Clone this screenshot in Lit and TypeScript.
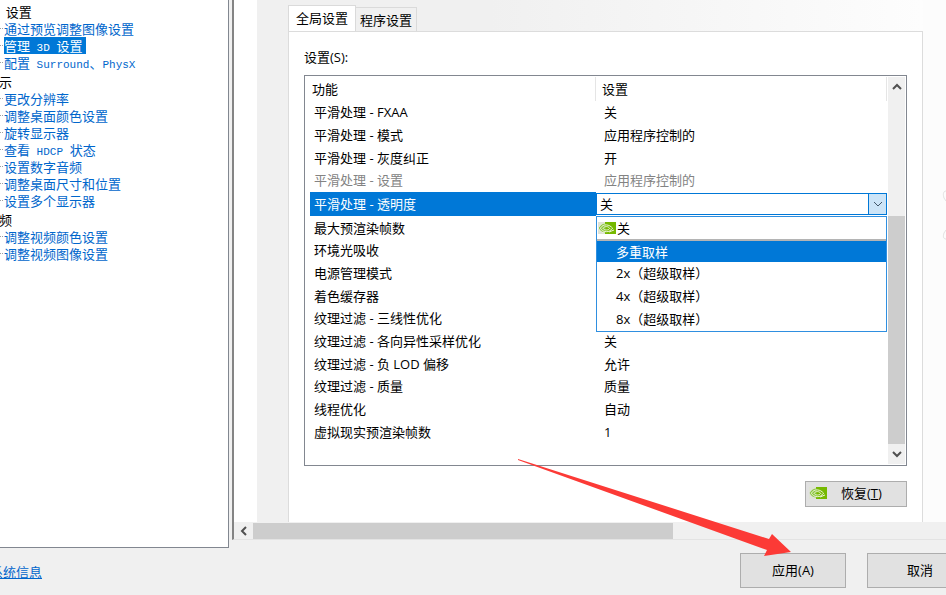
import { LitElement, html, css, svg, nothing } from "lit";
import { customElement, state } from "lit/decorators.js";

type Row = { name: string; value: string; disabled?: boolean; active?: boolean };
type Task = { label: string; header?: boolean; selected?: boolean };

const TASKS: Task[] = [
  { label: "查看辅助功能" },
  { label: "3D 设置", header: true },
  { label: "通过预览调整图像设置" },
  { label: "管理 3D 设置", selected: true },
  { label: "配置 Surround、PhysX" },
  { label: "显示", header: true },
  { label: "更改分辨率" },
  { label: "调整桌面颜色设置" },
  { label: "旋转显示器" },
  { label: "查看 HDCP 状态" },
  { label: "设置数字音频" },
  { label: "调整桌面尺寸和位置" },
  { label: "设置多个显示器" },
  { label: "视频", header: true },
  { label: "调整视频颜色设置" },
  { label: "调整视频图像设置" },
];

const ROWS: Row[] = [
  { name: "平滑处理 - FXAA", value: "关" },
  { name: "平滑处理 - 模式", value: "应用程序控制的" },
  { name: "平滑处理 - 灰度纠正", value: "开" },
  { name: "平滑处理 - 设置", value: "应用程序控制的", disabled: true },
  { name: "平滑处理 - 透明度", value: "关", active: true },
  { name: "最大预渲染帧数", value: "" },
  { name: "环境光吸收", value: "" },
  { name: "电源管理模式", value: "" },
  { name: "着色缓存器", value: "" },
  { name: "纹理过滤 - 三线性优化", value: "" },
  { name: "纹理过滤 - 各向异性采样优化", value: "关" },
  { name: "纹理过滤 - 负 LOD 偏移", value: "允许" },
  { name: "纹理过滤 - 质量", value: "质量" },
  { name: "线程优化", value: "自动" },
  { name: "虚拟现实预渲染帧数", value: "1" },
];

const OPTIONS = ["多重取样", "2x（超级取样）", "4x（超级取样）", "8x（超级取样）"];

const nvidiaMark = html`<svg class="mark" viewBox="0 0 18 12" aria-hidden="true">
  <rect x="7" y="0" width="11" height="12" fill="#76b900" />
  <path d="M0 6C2 2.800 4.500 1.400 7 1.200V0H0zM0 6C2 9.500 4.500 11 7 11V12H0z" fill="#dfe3d6" />
  <path d="M0.600 6C2.500 3 4.800 1.600 7.500 1.600V10.600C4.600 10.600 2.200 9 0.600 6z" fill="#8dc63f" />
  <path d="M2.400 6.200C4 3.600 6 2.800 8.200 2.900C11 3 13 4.400 14.600 6.200C12.800 8.600 10.600 9.800 8.200 9.700C5.400 9.600 3.500 8.400 2.400 6.200z" fill="none" stroke="#eef6dc" stroke-width="1" />
  <path d="M5 6.300C6 5 7 4.600 8.300 4.600C10 4.600 11 5.400 11.800 6.300C10.800 7.500 9.800 8 8.400 8C6.800 8 5.700 7.400 5 6.300z" fill="none" stroke="#eef6dc" stroke-width="1" />
  <path d="M11 10L16 8" stroke="#eef6dc" stroke-width="1" />
</svg>`;

const chevron = (d: string, color: string, width: number) =>
  html`<svg class="chevron" viewBox="0 0 10 10" aria-hidden="true">
    ${svg`<path d=${d} fill="none" stroke=${color} stroke-width=${width} />`}
  </svg>`;

/* Latin runs in the task tree are set in a monospaced face. */
const mixed = (text: string) =>
  text
    .split(/([ -~]+)/)
    .map((part) => (/^[ -~]+$/.test(part) ? html`<span class="mono">${part}</span>` : part));

@customElement("task-tree")
class TaskTree extends LitElement {
  static styles = css`
    :host {
      display: block;
      width: 228px;
      flex: none;
      overflow: hidden;
      background: #fff;
      border-right: 1px solid #828790;
      border-bottom: 1px solid #828790;
      font: 13px/17px "Noto Sans CJK SC", sans-serif;
    }
    ul {
      list-style: none;
      margin: -16px 0 0;
      padding: 0;
    }
    li {
      display: flex;
      align-items: center;
      height: 17px;
      white-space: pre;
    }
    li::before {
      content: "";
      width: 3px;
      margin-right: 1px;
      border-top: 1px dotted #a0a0a0;
    }
    .header {
      height: 17px;
      padding-top: 2px;
      margin-left: -14px;
      color: #000;
    }
    .header::before {
      display: none;
    }
    a {
      color: #0066cc;
      text-decoration: none;
      height: 17px;
    }
    .selected {
      background: #0078d7;
      color: #fff;
      padding-right: 4px;
    }
    .mono {
      font: 11px/15px "Liberation Mono", monospace;
    }
  `;
  render() {
    return html`<ul>
      ${TASKS.map((t) =>
        t.header
          ? html`<li class="header">${mixed(t.label)}</li>`
          : html`<li><a href="#" class=${t.selected ? "selected" : "task"}>${mixed(t.label)}</a></li>`
      )}
    </ul>`;
  }
}

@customElement("settings-list")
class SettingsList extends LitElement {
  @state() private highlighted = 0;

  static styles = css`
    :host {
      display: flex;
      flex: 1;
      border: 1px solid #828790;
      padding: 1px 1px 1px 5px;
      background: #fff;
    }
    .body {
      flex: 1;
    }
    table {
      width: 100%;
      height: 366px;
      table-layout: fixed;
      border-collapse: separate;
      border-spacing: 0;
    }
    col.name {
      width: 286px;
    }
    th,
    td {
      padding: 0 0 0 4px;
      text-align: left;
      font-weight: 400;
      line-height: 20px;
      white-space: nowrap;
    }
    th {
      height: 24px;
      padding-left: 2px;
      border-right: 1px solid #e5e5e5;
    }
    th + th {
      padding-left: 6px;
    }
    td + td {
      padding-left: 8px;
    }
    .disabled {
      color: #838383;
    }
    .active td {
      background: #0078d7;
      color: #fff;
    }
    .active td.editor {
      position: relative;
      padding: 0;
      background: #fff;
    }
    .combo {
      display: flex;
      height: 22px;
      box-sizing: border-box;
      border: 1px solid #0078d7;
    }
    select {
      flex: 1;
      appearance: none;
      border: 0;
      padding: 0 0 0 3px;
      margin: 0;
      background: #fff;
      color: #000;
      font: inherit;
      outline: none;
    }
    .drop {
      width: 18px;
      padding: 0;
      border: 0;
      border-left: 1px solid #0078d7;
      background: #cce4f7;
      display: flex;
      align-items: center;
      justify-content: center;
    }
    .chevron {
      width: 10px;
      height: 10px;
    }
    .popup {
      position: absolute;
      z-index: 1;
      top: 100%;
      left: 0;
      right: 0;
      margin: 0;
      padding: 0;
      list-style: none;
      background: #fff;
      color: #000;
      border: 1px solid #2f8fe0;
    }
    .popup li {
      height: 23px;
      line-height: 22px;
      padding-left: 19px;
    }
    .popup .current {
      display: flex;
      align-items: center;
      gap: 1px;
      height: 22px;
      padding-left: 1px;
      border-bottom: 2px solid #b4b4b4;
    }
    .popup .hot {
      height: 21px;
      background: #0078d7;
      color: #fff;
    }
    .mark {
      width: 18px;
      height: 12px;
    }
    .scroll {
      display: flex;
      flex-direction: column;
      width: 17px;
      margin-left: 1px;
      background: #f0f0f0;
    }
    .step {
      display: flex;
      align-items: center;
      justify-content: center;
      height: 20px;
      padding: 0;
      border: 0;
      background: none;
    }
    .before {
      flex: 120;
    }
    .thumb {
      flex: 229;
      background: #cdcdcd;
    }
  `;

  private editor(row: Row) {
    return html`<div class="combo">
        <select aria-label=${row.name}>
          <option>${row.value}</option>
        </select>
        <button class="drop" aria-label="展开">${chevron("M1 3L5 7L9 3", "#44586a", 1)}</button>
      </div>
      <ul class="popup" role="listbox">
        <li class="current" role="option">${nvidiaMark}关</li>
        ${OPTIONS.map(
          (o, i) => html`<li
            role="option"
            class=${i === this.highlighted ? "hot" : "choice"}
            @mouseenter=${() => (this.highlighted = i)}
          >${o}</li>`
        )}
      </ul>`;
  }

  render() {
    return html`<div class="body">
        <table>
          <colgroup><col class="name" /><col /></colgroup>
          <thead><tr><th>功能</th><th>设置</th></tr></thead>
          <tbody>
            ${ROWS.map(
              (r) => html`<tr class=${r.active ? "active" : r.disabled ? "disabled" : "row"}>
                <td>${r.name}</td>
                ${r.active ? html`<td class="editor">${this.editor(r)}</td>` : html`<td>${r.value || nothing}</td>`}
              </tr>`
            )}
          </tbody>
        </table>
      </div>
      <div class="scroll">
        <button class="step" aria-label="向上">${chevron("M1 7L5 3L9 7", "#505050", 2)}</button>
        <div class="before"></div>
        <div class="thumb"></div>
        <button class="step" aria-label="向下">${chevron("M1 3L5 7L9 3", "#505050", 2)}</button>
      </div>`;
  }
}

@customElement("app-root")
class AppRoot extends LitElement {
  static styles = css`
    :host {
      position: relative;
      display: flex;
      flex-direction: column;
      height: 100vh;
      overflow: hidden;
      background: #f0f0f0;
      color: #000;
      font: 13px/20px "Open Sans", "Noto Sans CJK SC", sans-serif;
    }
    .window {
      display: flex;
      flex: 1;
      min-height: 0;
    }
    .pane {
      display: flex;
      flex-direction: column;
      flex: 1;
      min-width: 0;
      margin: 0 0 8px 3px;
      border-left: 2px solid #848484;
      border-bottom: 1px solid #e3e3e3;
      background: #fff;
    }
    .page {
      display: flex;
      flex: 1;
      min-height: 0;
      margin-left: 23px;
      background: #f0f0f0;
    }
    .sheet {
      display: flex;
      flex-direction: column;
      flex: 1;
      padding-left: 31px;
      background: linear-gradient(to right, #f0f0f0 0 35%, #fdfdfd);
      background-size: 100% 31px;
      background-repeat: no-repeat;
    }
    .tabs {
      display: flex;
      align-items: flex-end;
      height: 31px;
    }
    .tab {
      box-sizing: border-box;
      height: 24px;
      padding: 0 4px;
      border: 1px solid #dadada;
      border-left: 0;
      border-bottom: 0;
      background: #f0f0f0;
      color: #000;
      font: inherit;
    }
    .tab.current {
      height: 27px;
      margin-bottom: -1px;
      padding: 0 7px 2px;
      border-left: 1px solid #dadada;
      background: #fff;
    }
    .panel {
      display: flex;
      flex-direction: column;
      flex: 1;
      padding: 15px 15px 15px;
      border: 1px solid #dcdcdc;
      border-bottom: 0;
      background: #fff;
    }
    .label {
      height: 28px;
    }
    .restore {
      align-self: flex-end;
      display: flex;
      align-items: center;
      gap: 14px;
      width: 102px;
      height: 26px;
      margin-top: 15px;
      padding: 0 3px 2px;
    }
    .mark {
      width: 18px;
      height: 12px;
    }
    .push {
      box-sizing: border-box;
      border: 1px solid #adadad;
      background: #e1e1e1;
      color: #000;
      font: inherit;
    }
    .edge {
      display: flex;
      align-items: center;
      justify-content: flex-end;
      width: 23px;
      background: #fcfcfc;
    }
    .ring {
      width: 4px;
      height: 52px;
      margin-bottom: 90px;
    }
    .hscroll {
      display: flex;
      align-items: center;
      height: 17px;
      background: #f0f0f0;
    }
    .step {
      display: flex;
      align-items: center;
      justify-content: center;
      width: 19px;
      padding: 0;
      border: 0;
      background: none;
    }
    .chevron {
      width: 10px;
      height: 10px;
    }
    .thumb {
      width: 59%;
      height: 16px;
      background: #cdcdcd;
    }
    .footer {
      display: flex;
      justify-content: space-between;
      height: 47px;
      margin-right: -27px;
    }
    .info {
      margin: 14px 0 0 -10px;
      color: #0066cc;
      text-decoration: underline;
    }
    .actions {
      display: flex;
      gap: 21px;
      padding-top: 5px;
    }
    .actions .push {
      width: 106px;
      height: 35px;
      padding-bottom: 2px;
    }
    .pointer {
      position: absolute;
      z-index: 2;
      right: 154px;
      bottom: 38px;
      width: 275px;
      height: 98px;
      pointer-events: none;
    }
  `;

  render() {
    return html`
      <div class="window">
        <task-tree></task-tree>
        <main class="pane">
          <div class="page">
            <div class="sheet">
              <div class="tabs" role="tablist">
                <button class="tab current" role="tab" aria-selected="true">全局设置</button>
                <button class="tab" role="tab">程序设置</button>
              </div>
              <section class="panel">
                <div class="label">设置(S):</div>
                <settings-list></settings-list>
                <button class="push restore">${nvidiaMark}<span>恢复(<u>T</u>)</span></button>
              </section>
            </div>
            <div class="edge">
              <svg class="ring" viewBox="0 0 4 52" aria-hidden="true">
                <path d="M4 1C1 1 1 5 2 8L4 11M4 40L2 43C1 46 1 49 4 49" fill="none" stroke="#e2e2e2" stroke-width="1" />
              </svg>
            </div>
          </div>
          <div class="hscroll">
            <button class="step" aria-label="向左">${chevron("M7 1L3 5L7 9", "#505050", 2)}</button>
            <div class="thumb"></div>
          </div>
        </main>
      </div>
      <footer class="footer">
        <a class="info" href="#">系统信息</a>
        <div class="actions">
          <button class="push">应用(A)</button>
          <button class="push">取消</button>
        </div>
      </footer>
      <svg class="pointer" viewBox="0 0 275 98" aria-hidden="true">
        <path d="M1 0L252 80L255 75L274 93L247 97L250 91L1 1z" fill="#fc3a36" />
      </svg>
    `;
  }
}
